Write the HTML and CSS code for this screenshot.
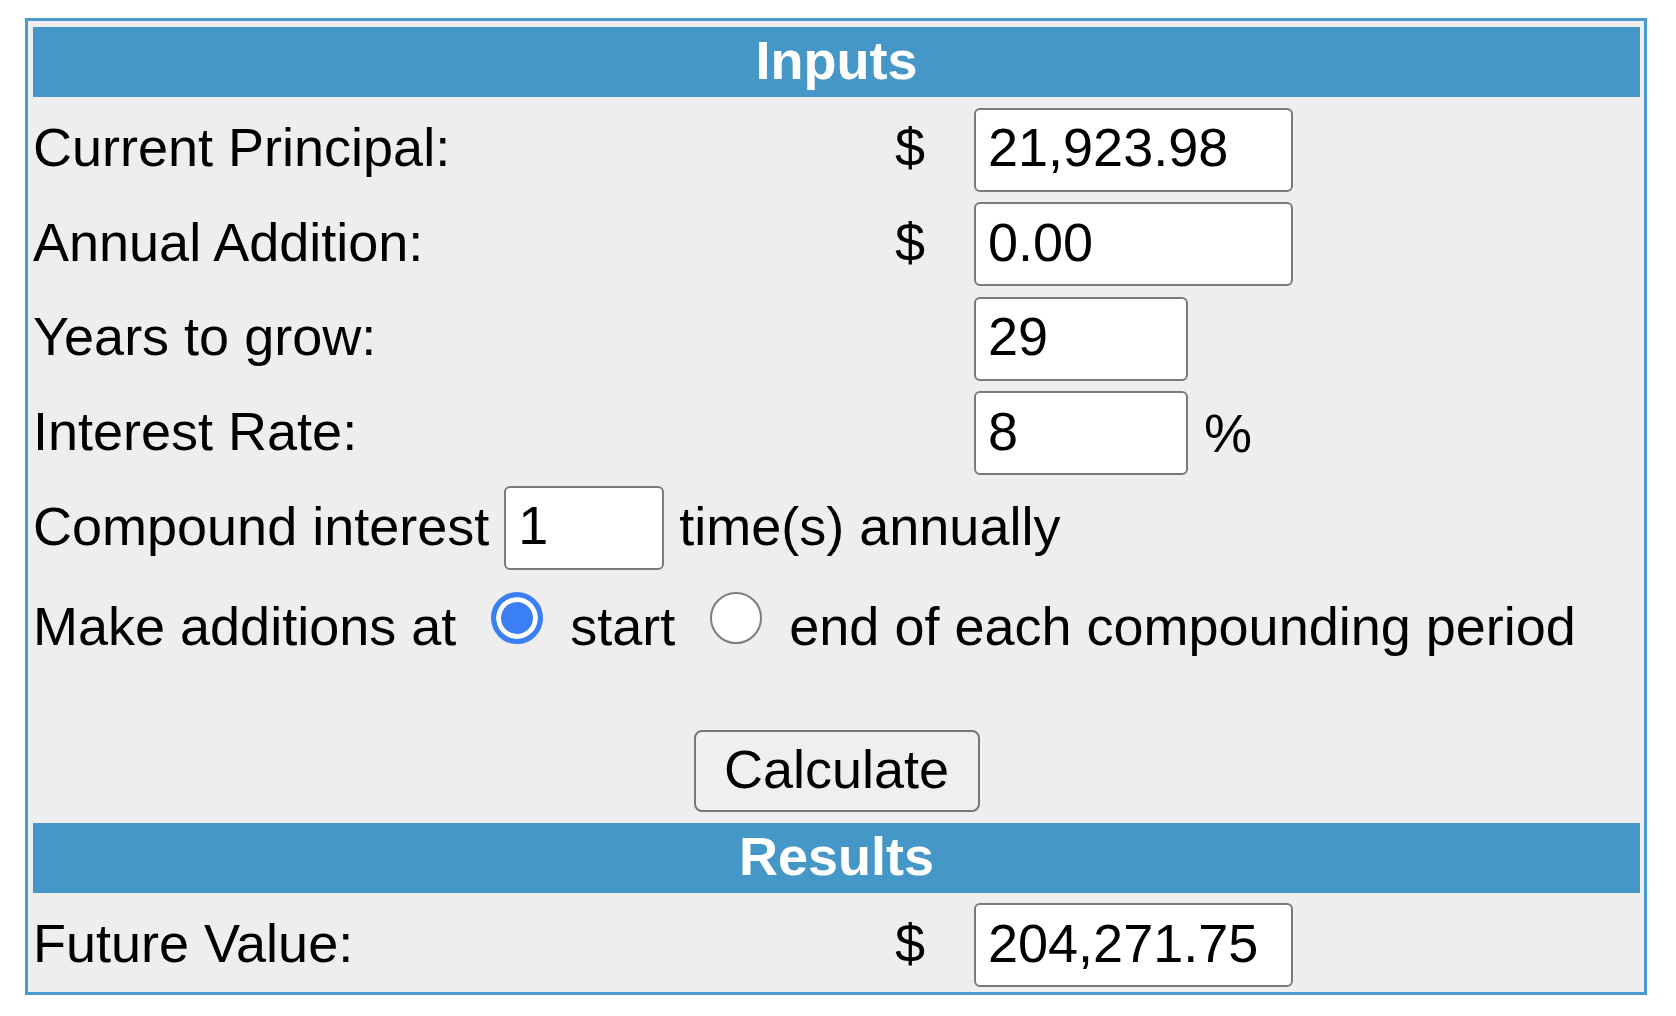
FILE: index.html
```html
<!DOCTYPE html>
<html lang="en">
<head>
<meta charset="utf-8">
<title>Compound Interest Calculator</title>
<link rel="stylesheet" href="styles.css">
</head>
<body>
<form class="calc">
  <div class="bar">Inputs</div>
  <div class="row">
    <div class="label">Current Principal:</div>
    <div class="cur">$</div>
    <div class="field"><input class="box wide" type="text" value="21,923.98"></div>
  </div>
  <div class="row">
    <div class="label">Annual Addition:</div>
    <div class="cur">$</div>
    <div class="field"><input class="box wide" type="text" value="0.00"></div>
  </div>
  <div class="row">
    <div class="label">Years to grow:</div>
    <div class="cur"></div>
    <div class="field"><input class="box mid" type="text" value="29"></div>
  </div>
  <div class="row">
    <div class="label">Interest Rate:</div>
    <div class="cur"></div>
    <div class="field"><input class="box mid" type="text" value="8"><span class="pct">%</span></div>
  </div>
  <div class="line">Compound interest <input class="box small" type="text" value="1"> time(s) annually</div>
  <div class="line radios">Make additions at <input class="radio" type="radio" name="when" checked> start <input class="radio" type="radio" name="when"> end of each compounding period</div>
  <div class="actions"><button class="btn" type="button">Calculate</button></div>
  <div class="bar">Results</div>
  <div class="row">
    <div class="label">Future Value:</div>
    <div class="cur">$</div>
    <div class="field"><input class="box wide" type="text" value="204,271.75"></div>
  </div>
</form>
</body>
</html>
```
FILE: styles.css
```css
html, body {
  margin: 0;
  padding: 0;
  background: #ffffff;
}

body {
  font-family: "Liberation Sans", Arial, sans-serif;
  font-size: 54px;
  color: #000000;
}

.calc {
  box-sizing: border-box;
  width: 1622px;
  margin: 18px 0 0 25px;
  border: 3px solid #4a9bcf;
  background: #eeeeee;
  padding: 6px 4px 5px 5px;
  display: flex;
  flex-direction: column;
  gap: 10.5px;
}

.bar {
  box-sizing: border-box;
  height: 70px;
  padding-bottom: 4px;
  background: #4597c8;
  color: #ffffff;
  font-weight: bold;
  text-align: center;
  line-height: 66px;
}

.row {
  display: grid;
  grid-template-columns: 862px 79px 1fr;
  align-items: center;
  height: 84px;
}

.label, .cur {
  line-height: normal;
  white-space: nowrap;
  padding-bottom: 5px;
}

.field {
  display: flex;
  align-items: center;
}

.box {
  box-sizing: border-box;
  height: 84px;
  margin: 0;
  padding: 0 12px 5px 12px;
  border: 2px solid #7a7a7a;
  border-radius: 6px;
  background: #ffffff;
  font-family: inherit;
  font-size: 54px;
  color: #000000;
  outline: none;
}

.wide { width: 319px; }
.mid { width: 214px; }
.small { width: 160px; }

.pct {
  margin-left: 16px;
}

.line {
  line-height: normal;
  white-space: nowrap;
}

.radio {
  appearance: none;
  -webkit-appearance: none;
  box-sizing: border-box;
  width: 52px;
  height: 52px;
  margin: 12px 12px 0 20px;
  border-radius: 50%;
  border: 2.5px solid #7d7d7d;
  background: #ffffff;
  vertical-align: 1px;
}

.radio:checked {
  border: 5px solid #3b7ff5;
  background: #3b7ff5;
  box-shadow: inset 0 0 0 5px #ffffff;
}

.actions {
  margin-top: 62.5px;
  display: flex;
  justify-content: center;
}

.btn {
  box-sizing: border-box;
  width: 286px;
  height: 82px;
  margin: 0;
  padding: 0 0 4px 0;
  border: 2px solid #777777;
  border-radius: 8px;
  background: #efefef;
  font-family: inherit;
  font-size: 54px;
  color: #000000;
}
```
